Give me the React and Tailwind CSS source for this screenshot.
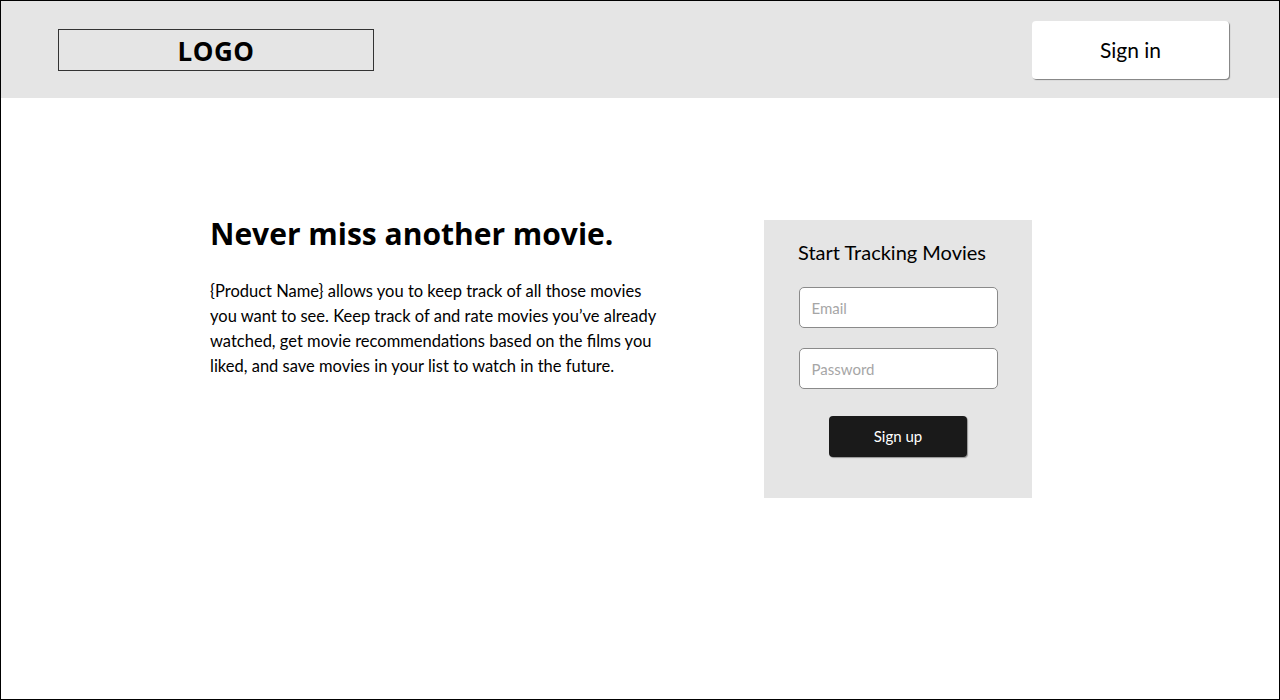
import React from "react";

// Landing page wireframe: header with logo + sign in, hero text and sign-up card
const Header = () => (
  <header className="flex items-center justify-between h-[97px] bg-[#e5e5e5] pl-[57px] pr-[50px]">
    <div className="flex items-center justify-center w-[316px] h-[42px] border border-[#333] pt-[3px]">
      <span className="text-[26px] font-bold tracking-[0.5px] text-black" style={{ fontFamily: "'Open Sans', sans-serif" }}>
        LOGO
      </span>
    </div>
    <button className="w-[197px] h-[58px] bg-white rounded-[4px] shadow-[1px_1px_1px_rgba(0,0,0,0.45)] text-[21px] text-black">
      Sign in
    </button>
  </header>
);

const SignUpCard = () => (
  <div className="w-[268px] h-[278px] bg-[#e5e5e5] flex flex-col items-center pt-[19px]">
    <h2 className="text-[20px] text-black leading-[26px] self-start ml-[34px]">Start Tracking Movies</h2>
    <input
      type="email"
      placeholder="Email"
      className="mt-[22px] w-[199px] h-[41px] bg-white border border-[#8a8a8a] rounded-[5px] px-3 text-[15px] placeholder:text-[#a6a6a6] outline-none"
    />
    <input
      type="password"
      placeholder="Password"
      className="mt-[20px] w-[199px] h-[41px] bg-white border border-[#8a8a8a] rounded-[5px] px-3 text-[15px] placeholder:text-[#a6a6a6] outline-none"
    />
    <button className="mt-[27px] w-[138px] h-[41px] bg-[#1a1a1a] rounded-[4px] shadow-[1px_1px_1px_rgba(0,0,0,0.35)] text-white text-[15px]">
      Sign up
    </button>
  </div>
);

export default function App() {
  return (
    <div
      className="w-[1280px] h-[700px] border border-black bg-white overflow-hidden flex flex-col"
      style={{ fontFamily: "Lato, 'Noto Sans', sans-serif" }}
    >
      <Header />
      <main className="flex items-start pl-[209px] pt-[122px]">
        <div className="w-[460px]">
          <h1
            className="text-[30px] font-bold leading-[36px] text-black -mt-[4px]"
            style={{ fontFamily: "'Open Sans', sans-serif" }}
          >
            Never miss another movie.
          </h1>
          <p className="mt-[27px] text-[16.5px] leading-[25px] text-black whitespace-nowrap">
            {"{Product Name}"} allows you to keep track of all those movies
            <br />
            you want to see. Keep track of and rate movies you’ve already
            <br />
            watched, get movie recommendations based on the films you
            <br />
            liked, and save movies in your list to watch in the future.
          </p>
        </div>
        <div className="ml-[94px]">
          <SignUpCard />
        </div>
      </main>
    </div>
  );
}
